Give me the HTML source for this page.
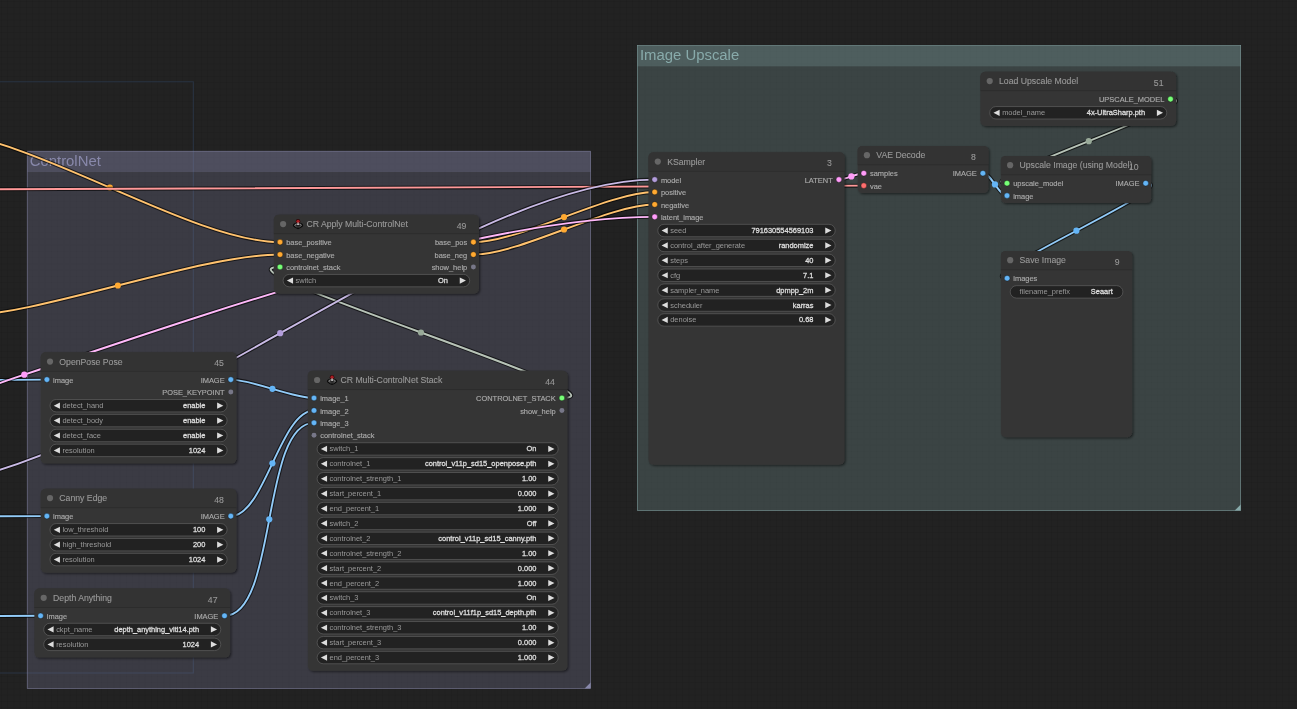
<!DOCTYPE html><html><head><meta charset="utf-8"><style>html,body{margin:0;padding:0;background:#222;overflow:hidden;width:1297px;height:709px}svg{display:block}text{font-family:"Liberation Sans", sans-serif}</style></head><body>
<svg width="1297" height="709" viewBox="0 0 1297 709" style="will-change:transform">
<defs><pattern id="grid" x="7.2" y="7.2" width="6.25" height="6.25" patternUnits="userSpaceOnUse"><rect x="0" y="0" width="6.25" height="0.6" fill="rgba(0,0,0,0.09)"/><rect x="0" y="0" width="0.6" height="6.25" fill="rgba(0,0,0,0.09)"/></pattern><filter id="sh" x="-10%" y="-10%" width="120%" height="120%"><feDropShadow dx="1.25" dy="1.25" stdDeviation="0.9" flood-color="#000" flood-opacity="0.5"/></filter></defs>
<rect width="1297" height="709" fill="#222"/>
<rect width="1297" height="709" fill="url(#grid)"/>
<rect x="-2" y="81.8" width="195.3" height="591.2" fill="none" stroke="rgba(60,95,150,0.3)" stroke-width="1"/>
<rect x="27.2" y="151.2" width="563.4" height="537.2" fill="#88A" fill-opacity="0.25"/>
<rect x="27.2" y="151.2" width="563.4" height="20.86" fill="#88A" fill-opacity="0.25"/>
<rect x="27.2" y="151.2" width="563.4" height="537.2" fill="none" stroke="#88A" stroke-opacity="0.85" stroke-width="0.62"/>
<path d="M590.6 682.4L590.6 688.4L584.6 688.4Z" fill="#88A"/>
<text x="29.68" y="166.1" font-size="14.9" fill="#88A">ControlNet</text>
<rect x="637.4" y="45.5" width="603.3" height="465.1" fill="#8AA" fill-opacity="0.25"/>
<rect x="637.4" y="45.5" width="603.3" height="20.86" fill="#8AA" fill-opacity="0.25"/>
<rect x="637.4" y="45.5" width="603.3" height="465.1" fill="none" stroke="#8AA" stroke-opacity="0.85" stroke-width="0.62"/>
<path d="M1240.7 504.6L1240.7 510.6L1234.7 510.6Z" fill="#8AA"/>
<text x="639.88" y="60.4" font-size="14.9" fill="#8AA">Image Upscale</text>
<path d="M-60.25 133C29.08 133 190.68 242.12 280.01 242.12" stroke="rgba(0,0,0,0.62)" stroke-width="4" fill="none" stroke-linejoin="round"/>
<path d="M-60.25 133C29.08 133 190.68 242.12 280.01 242.12" stroke="#ffc26e" stroke-width="1.9" fill="none"/>
<circle cx="109.88" cy="187.56" r="3.1" fill="#FFA931"/>
<path d="M-44.25 316.5C38.28 316.5 197.48 254.54 280.01 254.54" stroke="rgba(0,0,0,0.62)" stroke-width="4" fill="none" stroke-linejoin="round"/>
<path d="M-44.25 316.5C38.28 316.5 197.48 254.54 280.01 254.54" stroke="#ffc26e" stroke-width="1.9" fill="none"/>
<circle cx="117.88" cy="285.52" r="3.1" fill="#FFA931"/>
<path d="M561.91 398.02C639.63 398.02 202.29 266.96 280.01 266.96" stroke="rgba(0,0,0,0.62)" stroke-width="4" fill="none" stroke-linejoin="round"/>
<path d="M561.91 398.02C639.63 398.02 202.29 266.96 280.01 266.96" stroke="#b7c3b7" stroke-width="1.9" fill="none"/>
<circle cx="420.96" cy="332.49" r="3.1" fill="#9A9"/>
<path d="M-500 389C-363.25 389 -89.84 379.62 46.91 379.62" stroke="rgba(0,0,0,0.62)" stroke-width="4" fill="none" stroke-linejoin="round"/>
<path d="M-500 389C-363.25 389 -89.84 379.62 46.91 379.62" stroke="#92cbf8" stroke-width="1.9" fill="none"/>
<circle cx="-226.55" cy="384.31" r="3.1" fill="#64B5F6"/>
<path d="M-500 518C-363.27 518 -89.82 516.12 46.91 516.12" stroke="rgba(0,0,0,0.62)" stroke-width="4" fill="none" stroke-linejoin="round"/>
<path d="M-500 518C-363.27 518 -89.82 516.12 46.91 516.12" stroke="#92cbf8" stroke-width="1.9" fill="none"/>
<circle cx="-226.55" cy="517.06" r="3.1" fill="#64B5F6"/>
<path d="M-500 618C-364.85 618 -94.54 615.82 40.61 615.82" stroke="rgba(0,0,0,0.62)" stroke-width="4" fill="none" stroke-linejoin="round"/>
<path d="M-500 618C-364.85 618 -94.54 615.82 40.61 615.82" stroke="#92cbf8" stroke-width="1.9" fill="none"/>
<circle cx="-229.7" cy="616.91" r="3.1" fill="#64B5F6"/>
<path d="M230.81 379.62C252.11 379.62 292.71 398.02 314.01 398.02" stroke="rgba(0,0,0,0.62)" stroke-width="4" fill="none" stroke-linejoin="round"/>
<path d="M230.81 379.62C252.11 379.62 292.71 398.02 314.01 398.02" stroke="#92cbf8" stroke-width="1.9" fill="none"/>
<circle cx="272.41" cy="388.82" r="3.1" fill="#64B5F6"/>
<path d="M230.81 516.12C264.44 516.12 280.38 410.44 314.01 410.44" stroke="rgba(0,0,0,0.62)" stroke-width="4" fill="none" stroke-linejoin="round"/>
<path d="M230.81 516.12C264.44 516.12 280.38 410.44 314.01 410.44" stroke="#92cbf8" stroke-width="1.9" fill="none"/>
<circle cx="272.41" cy="463.28" r="3.1" fill="#64B5F6"/>
<path d="M224.51 615.82C277.69 615.82 260.83 422.86 314.01 422.86" stroke="rgba(0,0,0,0.62)" stroke-width="4" fill="none" stroke-linejoin="round"/>
<path d="M224.51 615.82C277.69 615.82 260.83 422.86 314.01 422.86" stroke="#92cbf8" stroke-width="1.9" fill="none"/>
<circle cx="269.26" cy="519.34" r="3.1" fill="#64B5F6"/>
<path d="M838.91 179.62C845.34 179.62 857.38 173.22 863.81 173.22" stroke="rgba(0,0,0,0.62)" stroke-width="4" fill="none" stroke-linejoin="round"/>
<path d="M838.91 179.62C845.34 179.62 857.38 173.22 863.81 173.22" stroke="#ffb9fa" stroke-width="1.9" fill="none"/>
<circle cx="851.36" cy="176.42" r="3.1" fill="#FF9CF9"/>
<path d="M-1000 193.5C-534.04 193.5 397.85 185.64 863.81 185.64" stroke="rgba(0,0,0,0.62)" stroke-width="4" fill="none" stroke-linejoin="round"/>
<path d="M-1000 193.5C-534.04 193.5 397.85 185.64 863.81 185.64" stroke="#ff9999" stroke-width="1.9" fill="none"/>
<circle cx="-68.1" cy="189.57" r="3.1" fill="#FF6E6E"/>
<path d="M-94.31 486.78C108.08 486.78 452.32 179.62 654.71 179.62" stroke="rgba(0,0,0,0.62)" stroke-width="4" fill="none" stroke-linejoin="round"/>
<path d="M-94.31 486.78C108.08 486.78 452.32 179.62 654.71 179.62" stroke="#c9bae5" stroke-width="1.9" fill="none"/>
<circle cx="280.2" cy="333.2" r="3.1" fill="#B39DDB"/>
<path d="M473.41 242.12C520.43 242.12 607.69 192.04 654.71 192.04" stroke="rgba(0,0,0,0.62)" stroke-width="4" fill="none" stroke-linejoin="round"/>
<path d="M473.41 242.12C520.43 242.12 607.69 192.04 654.71 192.04" stroke="#ffc26e" stroke-width="1.9" fill="none"/>
<circle cx="564.06" cy="217.08" r="3.1" fill="#FFA931"/>
<path d="M473.41 254.54C520.43 254.54 607.69 204.46 654.71 204.46" stroke="rgba(0,0,0,0.62)" stroke-width="4" fill="none" stroke-linejoin="round"/>
<path d="M473.41 254.54C520.43 254.54 607.69 204.46 654.71 204.46" stroke="#ffc26e" stroke-width="1.9" fill="none"/>
<circle cx="564.06" cy="229.5" r="3.1" fill="#FFA931"/>
<path d="M-606.11 532.53C-281.18 532.53 329.78 216.87 654.71 216.87" stroke="rgba(0,0,0,0.62)" stroke-width="4" fill="none" stroke-linejoin="round"/>
<path d="M-606.11 532.53C-281.18 532.53 329.78 216.87 654.71 216.87" stroke="#ffb9fa" stroke-width="1.9" fill="none"/>
<circle cx="24.3" cy="374.7" r="3.1" fill="#FF9CF9"/>
<path d="M1170.51 99.12C1216.48 99.12 961.04 183.22 1007.01 183.22" stroke="rgba(0,0,0,0.62)" stroke-width="4" fill="none" stroke-linejoin="round"/>
<path d="M1170.51 99.12C1216.48 99.12 961.04 183.22 1007.01 183.22" stroke="#b7c3b7" stroke-width="1.9" fill="none"/>
<circle cx="1088.76" cy="141.17" r="3.1" fill="#9A9"/>
<path d="M982.91 173.22C991.14 173.22 998.78 195.64 1007.01 195.64" stroke="rgba(0,0,0,0.62)" stroke-width="4" fill="none" stroke-linejoin="round"/>
<path d="M982.91 173.22C991.14 173.22 998.78 195.64 1007.01 195.64" stroke="#92cbf8" stroke-width="1.9" fill="none"/>
<circle cx="994.96" cy="184.43" r="3.1" fill="#64B5F6"/>
<path d="M1145.71 183.22C1187.72 183.22 965.1 278.22 1007.11 278.22" stroke="rgba(0,0,0,0.62)" stroke-width="4" fill="none" stroke-linejoin="round"/>
<path d="M1145.71 183.22C1187.72 183.22 965.1 278.22 1007.11 278.22" stroke="#92cbf8" stroke-width="1.9" fill="none"/>
<circle cx="1076.41" cy="230.72" r="3.1" fill="#64B5F6"/>
<g>
<rect x="273.8" y="214.8" width="205.2" height="79.02" rx="4.97" fill="#353535" filter="url(#sh)"/>
<path d="M273.8 233.43V219.77A4.97 4.97 0 0 1 278.77 214.8H474.03A4.97 4.97 0 0 1 479 219.77V233.43Z" fill="#333"/>
<rect x="273.8" y="233.43" width="205.2" height="0.7" fill="rgba(0,0,0,0.2)"/>
<circle cx="283.11" cy="224.11" r="3.1" fill="#666"/>
<g transform="translate(298.05 225.4)"><path d="M-5.2 0Q-5.2 -1.4 -3 -2.4L-1 -3H1L3 -2.4Q5.2 -1.4 5.2 0Q5.2 1.4 2.5 2.6L0 3.8L-2.5 2.6Q-5.2 1.4 -5.2 0Z" fill="#0a0a0a"/><ellipse cx="0" cy="-0.2" rx="3.3" ry="1.35" fill="none" stroke="#a8a8a8" stroke-width="0.9"/><ellipse cx="0" cy="1.6" rx="2.4" ry="0.9" fill="#2a2a2a"/><rect x="-0.5" y="-3.2" width="1.0" height="3.0" fill="#d8d8d8"/><circle cx="0" cy="-4.0" r="2.3" fill="#2a0708"/><circle cx="0" cy="-4.1" r="1.65" fill="#a81c22"/><rect x="-0.45" y="-3.0" width="0.9" height="2.6" fill="#e0e0e0"/></g>
<text transform="translate(306.43 227.22) scale(0.91 1)" font-size="9.56" fill="#999" stroke="#999" stroke-width="0.12">CR Apply Multi-ControlNet</text>
<text transform="translate(466.4 228.8) scale(1 1)" font-size="8.69" fill="#999" stroke="#999" stroke-width="0.1" text-anchor="end">49</text>
<circle cx="280.01" cy="242.12" r="2.78" fill="#FFA931" stroke="rgba(0,0,0,0.4)" stroke-width="0.8"/>
<text x="286.22" y="245.22" font-size="7.45" fill="#AAA" stroke="#AAA" stroke-width="0.15">base_positive</text>
<circle cx="280.01" cy="254.54" r="2.78" fill="#FFA931" stroke="rgba(0,0,0,0.4)" stroke-width="0.8"/>
<text x="286.22" y="257.64" font-size="7.45" fill="#AAA" stroke="#AAA" stroke-width="0.15">base_negative</text>
<circle cx="280.01" cy="266.96" r="2.78" fill="#7F7" stroke="rgba(0,0,0,0.4)" stroke-width="0.8"/>
<text x="286.22" y="270.06" font-size="7.45" fill="#AAA" stroke="#AAA" stroke-width="0.15">controlnet_stack</text>
<circle cx="473.41" cy="242.12" r="2.78" fill="#FFA931" stroke="rgba(0,0,0,0.4)" stroke-width="0.8"/>
<text x="467.2" y="245.22" font-size="7.45" fill="#AAA" stroke="#AAA" stroke-width="0.15" text-anchor="end">base_pos</text>
<circle cx="473.41" cy="254.54" r="2.78" fill="#FFA931" stroke="rgba(0,0,0,0.4)" stroke-width="0.8"/>
<text x="467.2" y="257.64" font-size="7.45" fill="#AAA" stroke="#AAA" stroke-width="0.15" text-anchor="end">base_neg</text>
<circle cx="473.41" cy="266.96" r="2.48" fill="#778"/>
<text x="467.2" y="270.06" font-size="7.45" fill="#AAA" stroke="#AAA" stroke-width="0.15" text-anchor="end">show_help</text>
<rect x="283.11" y="274.41" width="186.57" height="12.42" rx="6.21" fill="#222" stroke="#666" stroke-width="0.62"/>
<path d="M293.05 277.51L286.84 280.62L293.05 283.72Z" fill="#DDD"/>
<path d="M459.75 277.51L465.96 280.62L459.75 283.72Z" fill="#DDD"/>
<text x="295.53" y="283.1" font-size="7.45" fill="#999">switch</text>
<text x="447.95" y="283.1" font-size="7.45" fill="#DDD" stroke="#DDD" stroke-width="0.3" text-anchor="end">On</text>
</g>
<g>
<rect x="40.7" y="352.3" width="195.7" height="111.31" rx="4.97" fill="#353535" filter="url(#sh)"/>
<path d="M40.7 370.93V357.27A4.97 4.97 0 0 1 45.67 352.3H231.43A4.97 4.97 0 0 1 236.4 357.27V370.93Z" fill="#333"/>
<rect x="40.7" y="370.93" width="195.7" height="0.7" fill="rgba(0,0,0,0.2)"/>
<circle cx="50.01" cy="361.61" r="3.1" fill="#666"/>
<text transform="translate(59.33 364.72) scale(0.91 1)" font-size="9.56" fill="#999" stroke="#999" stroke-width="0.12">OpenPose Pose</text>
<text transform="translate(223.8 366.3) scale(1 1)" font-size="8.69" fill="#999" stroke="#999" stroke-width="0.1" text-anchor="end">45</text>
<circle cx="46.91" cy="379.62" r="2.78" fill="#64B5F6" stroke="rgba(0,0,0,0.4)" stroke-width="0.8"/>
<text x="53.12" y="382.72" font-size="7.45" fill="#AAA" stroke="#AAA" stroke-width="0.15">image</text>
<circle cx="230.81" cy="379.62" r="2.78" fill="#64B5F6" stroke="rgba(0,0,0,0.4)" stroke-width="0.8"/>
<text x="224.6" y="382.72" font-size="7.45" fill="#AAA" stroke="#AAA" stroke-width="0.15" text-anchor="end">IMAGE</text>
<circle cx="230.81" cy="392.04" r="2.48" fill="#778"/>
<text x="224.6" y="395.14" font-size="7.45" fill="#AAA" stroke="#AAA" stroke-width="0.15" text-anchor="end">POSE_KEYPOINT</text>
<rect x="50.01" y="399.49" width="177.07" height="12.42" rx="6.21" fill="#222" stroke="#666" stroke-width="0.62"/>
<path d="M59.95 402.59L53.74 405.7L59.95 408.8Z" fill="#DDD"/>
<path d="M217.15 402.59L223.36 405.7L217.15 408.8Z" fill="#DDD"/>
<text x="62.43" y="408.18" font-size="7.45" fill="#999">detect_hand</text>
<text x="205.35" y="408.18" font-size="7.45" fill="#DDD" stroke="#DDD" stroke-width="0.3" text-anchor="end">enable</text>
<rect x="50.01" y="414.39" width="177.07" height="12.42" rx="6.21" fill="#222" stroke="#666" stroke-width="0.62"/>
<path d="M59.95 417.49L53.74 420.6L59.95 423.7Z" fill="#DDD"/>
<path d="M217.15 417.49L223.36 420.6L217.15 423.7Z" fill="#DDD"/>
<text x="62.43" y="423.08" font-size="7.45" fill="#999">detect_body</text>
<text x="205.35" y="423.08" font-size="7.45" fill="#DDD" stroke="#DDD" stroke-width="0.3" text-anchor="end">enable</text>
<rect x="50.01" y="429.29" width="177.07" height="12.42" rx="6.21" fill="#222" stroke="#666" stroke-width="0.62"/>
<path d="M59.95 432.4L53.74 435.5L59.95 438.61Z" fill="#DDD"/>
<path d="M217.15 432.4L223.36 435.5L217.15 438.61Z" fill="#DDD"/>
<text x="62.43" y="437.98" font-size="7.45" fill="#999">detect_face</text>
<text x="205.35" y="437.98" font-size="7.45" fill="#DDD" stroke="#DDD" stroke-width="0.3" text-anchor="end">enable</text>
<rect x="50.01" y="444.19" width="177.07" height="12.42" rx="6.21" fill="#222" stroke="#666" stroke-width="0.62"/>
<path d="M59.95 447.3L53.74 450.4L59.95 453.51Z" fill="#DDD"/>
<path d="M217.15 447.3L223.36 450.4L217.15 453.51Z" fill="#DDD"/>
<text x="62.43" y="452.89" font-size="7.45" fill="#999">resolution</text>
<text x="205.35" y="452.89" font-size="7.45" fill="#DDD" stroke="#DDD" stroke-width="0.3" text-anchor="end">1024</text>
</g>
<g>
<rect x="40.7" y="488.8" width="195.7" height="83.99" rx="4.97" fill="#353535" filter="url(#sh)"/>
<path d="M40.7 507.43V493.77A4.97 4.97 0 0 1 45.67 488.8H231.43A4.97 4.97 0 0 1 236.4 493.77V507.43Z" fill="#333"/>
<rect x="40.7" y="507.43" width="195.7" height="0.7" fill="rgba(0,0,0,0.2)"/>
<circle cx="50.01" cy="498.11" r="3.1" fill="#666"/>
<text transform="translate(59.33 501.22) scale(0.91 1)" font-size="9.56" fill="#999" stroke="#999" stroke-width="0.12">Canny Edge</text>
<text transform="translate(223.8 502.8) scale(1 1)" font-size="8.69" fill="#999" stroke="#999" stroke-width="0.1" text-anchor="end">48</text>
<circle cx="46.91" cy="516.12" r="2.78" fill="#64B5F6" stroke="rgba(0,0,0,0.4)" stroke-width="0.8"/>
<text x="53.12" y="519.22" font-size="7.45" fill="#AAA" stroke="#AAA" stroke-width="0.15">image</text>
<circle cx="230.81" cy="516.12" r="2.78" fill="#64B5F6" stroke="rgba(0,0,0,0.4)" stroke-width="0.8"/>
<text x="224.6" y="519.22" font-size="7.45" fill="#AAA" stroke="#AAA" stroke-width="0.15" text-anchor="end">IMAGE</text>
<rect x="50.01" y="523.57" width="177.07" height="12.42" rx="6.21" fill="#222" stroke="#666" stroke-width="0.62"/>
<path d="M59.95 526.67L53.74 529.78L59.95 532.88Z" fill="#DDD"/>
<path d="M217.15 526.67L223.36 529.78L217.15 532.88Z" fill="#DDD"/>
<text x="62.43" y="532.26" font-size="7.45" fill="#999">low_threshold</text>
<text x="205.35" y="532.26" font-size="7.45" fill="#DDD" stroke="#DDD" stroke-width="0.3" text-anchor="end">100</text>
<rect x="50.01" y="538.47" width="177.07" height="12.42" rx="6.21" fill="#222" stroke="#666" stroke-width="0.62"/>
<path d="M59.95 541.58L53.74 544.68L59.95 547.79Z" fill="#DDD"/>
<path d="M217.15 541.58L223.36 544.68L217.15 547.79Z" fill="#DDD"/>
<text x="62.43" y="547.16" font-size="7.45" fill="#999">high_threshold</text>
<text x="205.35" y="547.16" font-size="7.45" fill="#DDD" stroke="#DDD" stroke-width="0.3" text-anchor="end">200</text>
<rect x="50.01" y="553.37" width="177.07" height="12.42" rx="6.21" fill="#222" stroke="#666" stroke-width="0.62"/>
<path d="M59.95 556.48L53.74 559.58L59.95 562.69Z" fill="#DDD"/>
<path d="M217.15 556.48L223.36 559.58L217.15 562.69Z" fill="#DDD"/>
<text x="62.43" y="562.07" font-size="7.45" fill="#999">resolution</text>
<text x="205.35" y="562.07" font-size="7.45" fill="#DDD" stroke="#DDD" stroke-width="0.3" text-anchor="end">1024</text>
</g>
<g>
<rect x="34.4" y="588.5" width="195.7" height="69.09" rx="4.97" fill="#353535" filter="url(#sh)"/>
<path d="M34.4 607.13V593.47A4.97 4.97 0 0 1 39.37 588.5H225.13A4.97 4.97 0 0 1 230.1 593.47V607.13Z" fill="#333"/>
<rect x="34.4" y="607.13" width="195.7" height="0.7" fill="rgba(0,0,0,0.2)"/>
<circle cx="43.71" cy="597.81" r="3.1" fill="#666"/>
<text transform="translate(53.03 600.92) scale(0.91 1)" font-size="9.56" fill="#999" stroke="#999" stroke-width="0.12">Depth Anything</text>
<text transform="translate(217.5 602.5) scale(1 1)" font-size="8.69" fill="#999" stroke="#999" stroke-width="0.1" text-anchor="end">47</text>
<circle cx="40.61" cy="615.82" r="2.78" fill="#64B5F6" stroke="rgba(0,0,0,0.4)" stroke-width="0.8"/>
<text x="46.82" y="618.92" font-size="7.45" fill="#AAA" stroke="#AAA" stroke-width="0.15">image</text>
<circle cx="224.51" cy="615.82" r="2.78" fill="#64B5F6" stroke="rgba(0,0,0,0.4)" stroke-width="0.8"/>
<text x="218.3" y="618.92" font-size="7.45" fill="#AAA" stroke="#AAA" stroke-width="0.15" text-anchor="end">IMAGE</text>
<rect x="43.71" y="623.27" width="177.07" height="12.42" rx="6.21" fill="#222" stroke="#666" stroke-width="0.62"/>
<path d="M53.65 626.37L47.44 629.48L53.65 632.58Z" fill="#DDD"/>
<path d="M210.85 626.37L217.06 629.48L210.85 632.58Z" fill="#DDD"/>
<text x="56.13" y="631.96" font-size="7.45" fill="#999">ckpt_name</text>
<text x="199.06" y="631.96" font-size="7.45" fill="#DDD" stroke="#DDD" stroke-width="0.3" text-anchor="end">depth_anything_vitl14.pth</text>
<rect x="43.71" y="638.17" width="177.07" height="12.42" rx="6.21" fill="#222" stroke="#666" stroke-width="0.62"/>
<path d="M53.65 641.28L47.44 644.38L53.65 647.49Z" fill="#DDD"/>
<path d="M210.85 641.28L217.06 644.38L210.85 647.49Z" fill="#DDD"/>
<text x="56.13" y="646.86" font-size="7.45" fill="#999">resolution</text>
<text x="199.06" y="646.86" font-size="7.45" fill="#DDD" stroke="#DDD" stroke-width="0.3" text-anchor="end">1024</text>
</g>
<g>
<rect x="307.8" y="370.7" width="259.7" height="300.06" rx="4.97" fill="#353535" filter="url(#sh)"/>
<path d="M307.8 389.33V375.67A4.97 4.97 0 0 1 312.77 370.7H562.53A4.97 4.97 0 0 1 567.5 375.67V389.33Z" fill="#333"/>
<rect x="307.8" y="389.33" width="259.7" height="0.7" fill="rgba(0,0,0,0.2)"/>
<circle cx="317.11" cy="380.01" r="3.1" fill="#666"/>
<g transform="translate(332.05 381.3)"><path d="M-5.2 0Q-5.2 -1.4 -3 -2.4L-1 -3H1L3 -2.4Q5.2 -1.4 5.2 0Q5.2 1.4 2.5 2.6L0 3.8L-2.5 2.6Q-5.2 1.4 -5.2 0Z" fill="#0a0a0a"/><ellipse cx="0" cy="-0.2" rx="3.3" ry="1.35" fill="none" stroke="#a8a8a8" stroke-width="0.9"/><ellipse cx="0" cy="1.6" rx="2.4" ry="0.9" fill="#2a2a2a"/><rect x="-0.5" y="-3.2" width="1.0" height="3.0" fill="#d8d8d8"/><circle cx="0" cy="-4.0" r="2.3" fill="#2a0708"/><circle cx="0" cy="-4.1" r="1.65" fill="#a81c22"/><rect x="-0.45" y="-3.0" width="0.9" height="2.6" fill="#e0e0e0"/></g>
<text transform="translate(340.43 383.12) scale(0.91 1)" font-size="9.56" fill="#999" stroke="#999" stroke-width="0.12">CR Multi-ControlNet Stack</text>
<text transform="translate(554.9 384.7) scale(1 1)" font-size="8.69" fill="#999" stroke="#999" stroke-width="0.1" text-anchor="end">44</text>
<circle cx="314.01" cy="398.02" r="2.78" fill="#64B5F6" stroke="rgba(0,0,0,0.4)" stroke-width="0.8"/>
<text x="320.22" y="401.12" font-size="7.45" fill="#AAA" stroke="#AAA" stroke-width="0.15">image_1</text>
<circle cx="314.01" cy="410.44" r="2.78" fill="#64B5F6" stroke="rgba(0,0,0,0.4)" stroke-width="0.8"/>
<text x="320.22" y="413.54" font-size="7.45" fill="#AAA" stroke="#AAA" stroke-width="0.15">image_2</text>
<circle cx="314.01" cy="422.86" r="2.78" fill="#64B5F6" stroke="rgba(0,0,0,0.4)" stroke-width="0.8"/>
<text x="320.22" y="425.96" font-size="7.45" fill="#AAA" stroke="#AAA" stroke-width="0.15">image_3</text>
<circle cx="314.01" cy="435.27" r="2.48" fill="#778"/>
<text x="320.22" y="438.38" font-size="7.45" fill="#AAA" stroke="#AAA" stroke-width="0.15">controlnet_stack</text>
<circle cx="561.91" cy="398.02" r="2.78" fill="#7F7" stroke="rgba(0,0,0,0.4)" stroke-width="0.8"/>
<text x="555.7" y="401.12" font-size="7.45" fill="#AAA" stroke="#AAA" stroke-width="0.15" text-anchor="end">CONTROLNET_STACK</text>
<circle cx="561.91" cy="410.44" r="2.48" fill="#778"/>
<text x="555.7" y="413.54" font-size="7.45" fill="#AAA" stroke="#AAA" stroke-width="0.15" text-anchor="end">show_help</text>
<rect x="317.11" y="442.72" width="241.07" height="12.42" rx="6.21" fill="#222" stroke="#666" stroke-width="0.62"/>
<path d="M327.05 445.83L320.84 448.93L327.05 452.04Z" fill="#DDD"/>
<path d="M548.25 445.83L554.46 448.93L548.25 452.04Z" fill="#DDD"/>
<text x="329.53" y="451.42" font-size="7.45" fill="#999">switch_1</text>
<text x="536.46" y="451.42" font-size="7.45" fill="#DDD" stroke="#DDD" stroke-width="0.3" text-anchor="end">On</text>
<rect x="317.11" y="457.63" width="241.07" height="12.42" rx="6.21" fill="#222" stroke="#666" stroke-width="0.62"/>
<path d="M327.05 460.73L320.84 463.83L327.05 466.94Z" fill="#DDD"/>
<path d="M548.25 460.73L554.46 463.83L548.25 466.94Z" fill="#DDD"/>
<text x="329.53" y="466.32" font-size="7.45" fill="#999">controlnet_1</text>
<text x="536.46" y="466.32" font-size="7.45" fill="#DDD" stroke="#DDD" stroke-width="0.3" text-anchor="end">control_v11p_sd15_openpose.pth</text>
<rect x="317.11" y="472.53" width="241.07" height="12.42" rx="6.21" fill="#222" stroke="#666" stroke-width="0.62"/>
<path d="M327.05 475.63L320.84 478.74L327.05 481.84Z" fill="#DDD"/>
<path d="M548.25 475.63L554.46 478.74L548.25 481.84Z" fill="#DDD"/>
<text x="329.53" y="481.22" font-size="7.45" fill="#999">controlnet_strength_1</text>
<text x="536.46" y="481.22" font-size="7.45" fill="#DDD" stroke="#DDD" stroke-width="0.3" text-anchor="end">1.00</text>
<rect x="317.11" y="487.43" width="241.07" height="12.42" rx="6.21" fill="#222" stroke="#666" stroke-width="0.62"/>
<path d="M327.05 490.53L320.84 493.64L327.05 496.74Z" fill="#DDD"/>
<path d="M548.25 490.53L554.46 493.64L548.25 496.74Z" fill="#DDD"/>
<text x="329.53" y="496.12" font-size="7.45" fill="#999">start_percent_1</text>
<text x="536.46" y="496.12" font-size="7.45" fill="#DDD" stroke="#DDD" stroke-width="0.3" text-anchor="end">0.000</text>
<rect x="317.11" y="502.33" width="241.07" height="12.42" rx="6.21" fill="#222" stroke="#666" stroke-width="0.62"/>
<path d="M327.05 505.44L320.84 508.54L327.05 511.64Z" fill="#DDD"/>
<path d="M548.25 505.44L554.46 508.54L548.25 511.64Z" fill="#DDD"/>
<text x="329.53" y="511.02" font-size="7.45" fill="#999">end_percent_1</text>
<text x="536.46" y="511.02" font-size="7.45" fill="#DDD" stroke="#DDD" stroke-width="0.3" text-anchor="end">1.000</text>
<rect x="317.11" y="517.23" width="241.07" height="12.42" rx="6.21" fill="#222" stroke="#666" stroke-width="0.62"/>
<path d="M327.05 520.34L320.84 523.44L327.05 526.55Z" fill="#DDD"/>
<path d="M548.25 520.34L554.46 523.44L548.25 526.55Z" fill="#DDD"/>
<text x="329.53" y="525.92" font-size="7.45" fill="#999">switch_2</text>
<text x="536.46" y="525.92" font-size="7.45" fill="#DDD" stroke="#DDD" stroke-width="0.3" text-anchor="end">Off</text>
<rect x="317.11" y="532.13" width="241.07" height="12.42" rx="6.21" fill="#222" stroke="#666" stroke-width="0.62"/>
<path d="M327.05 535.24L320.84 538.34L327.05 541.45Z" fill="#DDD"/>
<path d="M548.25 535.24L554.46 538.34L548.25 541.45Z" fill="#DDD"/>
<text x="329.53" y="540.83" font-size="7.45" fill="#999">controlnet_2</text>
<text x="536.46" y="540.83" font-size="7.45" fill="#DDD" stroke="#DDD" stroke-width="0.3" text-anchor="end">control_v11p_sd15_canny.pth</text>
<rect x="317.11" y="547.04" width="241.07" height="12.42" rx="6.21" fill="#222" stroke="#666" stroke-width="0.62"/>
<path d="M327.05 550.14L320.84 553.24L327.05 556.35Z" fill="#DDD"/>
<path d="M548.25 550.14L554.46 553.24L548.25 556.35Z" fill="#DDD"/>
<text x="329.53" y="555.73" font-size="7.45" fill="#999">controlnet_strength_2</text>
<text x="536.46" y="555.73" font-size="7.45" fill="#DDD" stroke="#DDD" stroke-width="0.3" text-anchor="end">1.00</text>
<rect x="317.11" y="561.94" width="241.07" height="12.42" rx="6.21" fill="#222" stroke="#666" stroke-width="0.62"/>
<path d="M327.05 565.04L320.84 568.15L327.05 571.25Z" fill="#DDD"/>
<path d="M548.25 565.04L554.46 568.15L548.25 571.25Z" fill="#DDD"/>
<text x="329.53" y="570.63" font-size="7.45" fill="#999">start_percent_2</text>
<text x="536.46" y="570.63" font-size="7.45" fill="#DDD" stroke="#DDD" stroke-width="0.3" text-anchor="end">0.000</text>
<rect x="317.11" y="576.84" width="241.07" height="12.42" rx="6.21" fill="#222" stroke="#666" stroke-width="0.62"/>
<path d="M327.05 579.94L320.84 583.05L327.05 586.15Z" fill="#DDD"/>
<path d="M548.25 579.94L554.46 583.05L548.25 586.15Z" fill="#DDD"/>
<text x="329.53" y="585.53" font-size="7.45" fill="#999">end_percent_2</text>
<text x="536.46" y="585.53" font-size="7.45" fill="#DDD" stroke="#DDD" stroke-width="0.3" text-anchor="end">1.000</text>
<rect x="317.11" y="591.74" width="241.07" height="12.42" rx="6.21" fill="#222" stroke="#666" stroke-width="0.62"/>
<path d="M327.05 594.84L320.84 597.95L327.05 601.05Z" fill="#DDD"/>
<path d="M548.25 594.84L554.46 597.95L548.25 601.05Z" fill="#DDD"/>
<text x="329.53" y="600.43" font-size="7.45" fill="#999">switch_3</text>
<text x="536.46" y="600.43" font-size="7.45" fill="#DDD" stroke="#DDD" stroke-width="0.3" text-anchor="end">On</text>
<rect x="317.11" y="606.64" width="241.07" height="12.42" rx="6.21" fill="#222" stroke="#666" stroke-width="0.62"/>
<path d="M327.05 609.75L320.84 612.85L327.05 615.96Z" fill="#DDD"/>
<path d="M548.25 609.75L554.46 612.85L548.25 615.96Z" fill="#DDD"/>
<text x="329.53" y="615.33" font-size="7.45" fill="#999">controlnet_3</text>
<text x="536.46" y="615.33" font-size="7.45" fill="#DDD" stroke="#DDD" stroke-width="0.3" text-anchor="end">control_v11f1p_sd15_depth.pth</text>
<rect x="317.11" y="621.54" width="241.07" height="12.42" rx="6.21" fill="#222" stroke="#666" stroke-width="0.62"/>
<path d="M327.05 624.65L320.84 627.75L327.05 630.86Z" fill="#DDD"/>
<path d="M548.25 624.65L554.46 627.75L548.25 630.86Z" fill="#DDD"/>
<text x="329.53" y="630.24" font-size="7.45" fill="#999">controlnet_strength_3</text>
<text x="536.46" y="630.24" font-size="7.45" fill="#DDD" stroke="#DDD" stroke-width="0.3" text-anchor="end">1.00</text>
<rect x="317.11" y="636.45" width="241.07" height="12.42" rx="6.21" fill="#222" stroke="#666" stroke-width="0.62"/>
<path d="M327.05 639.55L320.84 642.65L327.05 645.76Z" fill="#DDD"/>
<path d="M548.25 639.55L554.46 642.65L548.25 645.76Z" fill="#DDD"/>
<text x="329.53" y="645.14" font-size="7.45" fill="#999">start_percent_3</text>
<text x="536.46" y="645.14" font-size="7.45" fill="#DDD" stroke="#DDD" stroke-width="0.3" text-anchor="end">0.000</text>
<rect x="317.11" y="651.35" width="241.07" height="12.42" rx="6.21" fill="#222" stroke="#666" stroke-width="0.62"/>
<path d="M327.05 654.45L320.84 657.56L327.05 660.66Z" fill="#DDD"/>
<path d="M548.25 654.45L554.46 657.56L548.25 660.66Z" fill="#DDD"/>
<text x="329.53" y="660.04" font-size="7.45" fill="#999">end_percent_3</text>
<text x="536.46" y="660.04" font-size="7.45" fill="#DDD" stroke="#DDD" stroke-width="0.3" text-anchor="end">1.000</text>
</g>
<g>
<rect x="648.5" y="152.3" width="196" height="312.4" rx="4.97" fill="#353535" filter="url(#sh)"/>
<path d="M648.5 170.93V157.27A4.97 4.97 0 0 1 653.47 152.3H839.53A4.97 4.97 0 0 1 844.5 157.27V170.93Z" fill="#333"/>
<rect x="648.5" y="170.93" width="196" height="0.7" fill="rgba(0,0,0,0.2)"/>
<circle cx="657.81" cy="161.61" r="3.1" fill="#666"/>
<text transform="translate(667.13 164.72) scale(0.91 1)" font-size="9.56" fill="#999" stroke="#999" stroke-width="0.12">KSampler</text>
<text transform="translate(831.9 166.3) scale(1 1)" font-size="8.69" fill="#999" stroke="#999" stroke-width="0.1" text-anchor="end">3</text>
<circle cx="654.71" cy="179.62" r="2.78" fill="#B39DDB" stroke="rgba(0,0,0,0.4)" stroke-width="0.8"/>
<text x="660.92" y="182.72" font-size="7.45" fill="#AAA" stroke="#AAA" stroke-width="0.15">model</text>
<circle cx="654.71" cy="192.04" r="2.78" fill="#FFA931" stroke="rgba(0,0,0,0.4)" stroke-width="0.8"/>
<text x="660.92" y="195.14" font-size="7.45" fill="#AAA" stroke="#AAA" stroke-width="0.15">positive</text>
<circle cx="654.71" cy="204.46" r="2.78" fill="#FFA931" stroke="rgba(0,0,0,0.4)" stroke-width="0.8"/>
<text x="660.92" y="207.56" font-size="7.45" fill="#AAA" stroke="#AAA" stroke-width="0.15">negative</text>
<circle cx="654.71" cy="216.87" r="2.78" fill="#FF9CF9" stroke="rgba(0,0,0,0.4)" stroke-width="0.8"/>
<text x="660.92" y="219.98" font-size="7.45" fill="#AAA" stroke="#AAA" stroke-width="0.15">latent_image</text>
<circle cx="838.91" cy="179.62" r="2.78" fill="#FF9CF9" stroke="rgba(0,0,0,0.4)" stroke-width="0.8"/>
<text x="832.7" y="182.72" font-size="7.45" fill="#AAA" stroke="#AAA" stroke-width="0.15" text-anchor="end">LATENT</text>
<rect x="657.81" y="224.32" width="177.37" height="12.42" rx="6.21" fill="#222" stroke="#666" stroke-width="0.62"/>
<path d="M667.75 227.43L661.54 230.53L667.75 233.64Z" fill="#DDD"/>
<path d="M825.25 227.43L831.46 230.53L825.25 233.64Z" fill="#DDD"/>
<text x="670.23" y="233.02" font-size="7.45" fill="#999">seed</text>
<text x="813.46" y="233.02" font-size="7.45" fill="#DDD" stroke="#DDD" stroke-width="0.3" text-anchor="end">791630554569103</text>
<rect x="657.81" y="239.23" width="177.37" height="12.42" rx="6.21" fill="#222" stroke="#666" stroke-width="0.62"/>
<path d="M667.75 242.33L661.54 245.44L667.75 248.54Z" fill="#DDD"/>
<path d="M825.25 242.33L831.46 245.44L825.25 248.54Z" fill="#DDD"/>
<text x="670.23" y="247.92" font-size="7.45" fill="#999">control_after_generate</text>
<text x="813.46" y="247.92" font-size="7.45" fill="#DDD" stroke="#DDD" stroke-width="0.3" text-anchor="end">randomize</text>
<rect x="657.81" y="254.13" width="177.37" height="12.42" rx="6.21" fill="#222" stroke="#666" stroke-width="0.62"/>
<path d="M667.75 257.23L661.54 260.34L667.75 263.44Z" fill="#DDD"/>
<path d="M825.25 257.23L831.46 260.34L825.25 263.44Z" fill="#DDD"/>
<text x="670.23" y="262.82" font-size="7.45" fill="#999">steps</text>
<text x="813.46" y="262.82" font-size="7.45" fill="#DDD" stroke="#DDD" stroke-width="0.3" text-anchor="end">40</text>
<rect x="657.81" y="269.03" width="177.37" height="12.42" rx="6.21" fill="#222" stroke="#666" stroke-width="0.62"/>
<path d="M667.75 272.13L661.54 275.24L667.75 278.34Z" fill="#DDD"/>
<path d="M825.25 272.13L831.46 275.24L825.25 278.34Z" fill="#DDD"/>
<text x="670.23" y="277.72" font-size="7.45" fill="#999">cfg</text>
<text x="813.46" y="277.72" font-size="7.45" fill="#DDD" stroke="#DDD" stroke-width="0.3" text-anchor="end">7.1</text>
<rect x="657.81" y="283.93" width="177.37" height="12.42" rx="6.21" fill="#222" stroke="#666" stroke-width="0.62"/>
<path d="M667.75 287.04L661.54 290.14L667.75 293.24Z" fill="#DDD"/>
<path d="M825.25 287.04L831.46 290.14L825.25 293.24Z" fill="#DDD"/>
<text x="670.23" y="292.62" font-size="7.45" fill="#999">sampler_name</text>
<text x="813.46" y="292.62" font-size="7.45" fill="#DDD" stroke="#DDD" stroke-width="0.3" text-anchor="end">dpmpp_2m</text>
<rect x="657.81" y="298.83" width="177.37" height="12.42" rx="6.21" fill="#222" stroke="#666" stroke-width="0.62"/>
<path d="M667.75 301.94L661.54 305.04L667.75 308.15Z" fill="#DDD"/>
<path d="M825.25 301.94L831.46 305.04L825.25 308.15Z" fill="#DDD"/>
<text x="670.23" y="307.52" font-size="7.45" fill="#999">scheduler</text>
<text x="813.46" y="307.52" font-size="7.45" fill="#DDD" stroke="#DDD" stroke-width="0.3" text-anchor="end">karras</text>
<rect x="657.81" y="313.73" width="177.37" height="12.42" rx="6.21" fill="#222" stroke="#666" stroke-width="0.62"/>
<path d="M667.75 316.84L661.54 319.94L667.75 323.05Z" fill="#DDD"/>
<path d="M825.25 316.84L831.46 319.94L825.25 323.05Z" fill="#DDD"/>
<text x="670.23" y="322.43" font-size="7.45" fill="#999">denoise</text>
<text x="813.46" y="322.43" font-size="7.45" fill="#DDD" stroke="#DDD" stroke-width="0.3" text-anchor="end">0.68</text>
</g>
<g>
<rect x="857.6" y="145.9" width="130.9" height="47.19" rx="4.97" fill="#353535" filter="url(#sh)"/>
<path d="M857.6 164.53V150.87A4.97 4.97 0 0 1 862.57 145.9H983.53A4.97 4.97 0 0 1 988.5 150.87V164.53Z" fill="#333"/>
<rect x="857.6" y="164.53" width="130.9" height="0.7" fill="rgba(0,0,0,0.2)"/>
<circle cx="866.91" cy="155.21" r="3.1" fill="#666"/>
<text transform="translate(876.23 158.32) scale(0.91 1)" font-size="9.56" fill="#999" stroke="#999" stroke-width="0.12">VAE Decode</text>
<text transform="translate(975.9 159.9) scale(1 1)" font-size="8.69" fill="#999" stroke="#999" stroke-width="0.1" text-anchor="end">8</text>
<circle cx="863.81" cy="173.22" r="2.78" fill="#FF9CF9" stroke="rgba(0,0,0,0.4)" stroke-width="0.8"/>
<text x="870.02" y="176.32" font-size="7.45" fill="#AAA" stroke="#AAA" stroke-width="0.15">samples</text>
<circle cx="863.81" cy="185.64" r="2.78" fill="#FF6E6E" stroke="rgba(0,0,0,0.4)" stroke-width="0.8"/>
<text x="870.02" y="188.74" font-size="7.45" fill="#AAA" stroke="#AAA" stroke-width="0.15">vae</text>
<circle cx="982.91" cy="173.22" r="2.78" fill="#64B5F6" stroke="rgba(0,0,0,0.4)" stroke-width="0.8"/>
<text x="976.7" y="176.32" font-size="7.45" fill="#AAA" stroke="#AAA" stroke-width="0.15" text-anchor="end">IMAGE</text>
</g>
<g>
<rect x="980.4" y="71.8" width="195.7" height="54.19" rx="4.97" fill="#353535" filter="url(#sh)"/>
<path d="M980.4 90.43V76.77A4.97 4.97 0 0 1 985.37 71.8H1171.13A4.97 4.97 0 0 1 1176.1 76.77V90.43Z" fill="#333"/>
<rect x="980.4" y="90.43" width="195.7" height="0.7" fill="rgba(0,0,0,0.2)"/>
<circle cx="989.71" cy="81.11" r="3.1" fill="#666"/>
<text transform="translate(999.03 84.22) scale(0.91 1)" font-size="9.56" fill="#999" stroke="#999" stroke-width="0.12">Load Upscale Model</text>
<text transform="translate(1163.5 85.8) scale(1 1)" font-size="8.69" fill="#999" stroke="#999" stroke-width="0.1" text-anchor="end">51</text>
<circle cx="1170.51" cy="99.12" r="2.78" fill="#7F7" stroke="rgba(0,0,0,0.4)" stroke-width="0.8"/>
<text x="1164.3" y="102.22" font-size="7.45" fill="#AAA" stroke="#AAA" stroke-width="0.15" text-anchor="end">UPSCALE_MODEL</text>
<rect x="989.71" y="106.57" width="177.07" height="12.42" rx="6.21" fill="#222" stroke="#666" stroke-width="0.62"/>
<path d="M999.65 109.67L993.44 112.78L999.65 115.88Z" fill="#DDD"/>
<path d="M1156.85 109.67L1163.06 112.78L1156.85 115.88Z" fill="#DDD"/>
<text x="1002.13" y="115.26" font-size="7.45" fill="#999">model_name</text>
<text x="1145.05" y="115.26" font-size="7.45" fill="#DDD" stroke="#DDD" stroke-width="0.3" text-anchor="end">4x-UltraSharp.pth</text>
</g>
<g>
<rect x="1000.8" y="155.9" width="150.5" height="47.19" rx="4.97" fill="#353535" filter="url(#sh)"/>
<path d="M1000.8 174.53V160.87A4.97 4.97 0 0 1 1005.77 155.9H1146.33A4.97 4.97 0 0 1 1151.3 160.87V174.53Z" fill="#333"/>
<rect x="1000.8" y="174.53" width="150.5" height="0.7" fill="rgba(0,0,0,0.2)"/>
<circle cx="1010.11" cy="165.21" r="3.1" fill="#666"/>
<text transform="translate(1019.43 168.32) scale(0.91 1)" font-size="9.56" fill="#999" stroke="#999" stroke-width="0.12">Upscale Image (using Model)</text>
<text transform="translate(1138.7 169.9) scale(1 1)" font-size="8.69" fill="#999" stroke="#999" stroke-width="0.1" text-anchor="end">10</text>
<circle cx="1007.01" cy="183.22" r="2.78" fill="#7F7" stroke="rgba(0,0,0,0.4)" stroke-width="0.8"/>
<text x="1013.22" y="186.32" font-size="7.45" fill="#AAA" stroke="#AAA" stroke-width="0.15">upscale_model</text>
<circle cx="1007.01" cy="195.64" r="2.78" fill="#64B5F6" stroke="rgba(0,0,0,0.4)" stroke-width="0.8"/>
<text x="1013.22" y="198.74" font-size="7.45" fill="#AAA" stroke="#AAA" stroke-width="0.15">image</text>
<circle cx="1145.71" cy="183.22" r="2.78" fill="#64B5F6" stroke="rgba(0,0,0,0.4)" stroke-width="0.8"/>
<text x="1139.5" y="186.32" font-size="7.45" fill="#AAA" stroke="#AAA" stroke-width="0.15" text-anchor="end">IMAGE</text>
</g>
<g>
<rect x="1000.9" y="250.9" width="131.3" height="186.3" rx="4.97" fill="#353535" filter="url(#sh)"/>
<path d="M1000.9 269.53V255.87A4.97 4.97 0 0 1 1005.87 250.9H1127.23A4.97 4.97 0 0 1 1132.2 255.87V269.53Z" fill="#333"/>
<rect x="1000.9" y="269.53" width="131.3" height="0.7" fill="rgba(0,0,0,0.2)"/>
<circle cx="1010.21" cy="260.21" r="3.1" fill="#666"/>
<text transform="translate(1019.53 263.32) scale(0.91 1)" font-size="9.56" fill="#999" stroke="#999" stroke-width="0.12">Save Image</text>
<text transform="translate(1119.6 264.9) scale(1 1)" font-size="8.69" fill="#999" stroke="#999" stroke-width="0.1" text-anchor="end">9</text>
<circle cx="1007.11" cy="278.22" r="2.78" fill="#64B5F6" stroke="rgba(0,0,0,0.4)" stroke-width="0.8"/>
<text x="1013.32" y="281.32" font-size="7.45" fill="#AAA" stroke="#AAA" stroke-width="0.15">images</text>
<rect x="1010.21" y="285.67" width="112.67" height="12.42" rx="6.21" fill="#222" stroke="#666" stroke-width="0.62"/>
<text x="1019.53" y="294.36" font-size="7.45" fill="#999">filename_prefix</text>
<text x="1112.77" y="294.36" font-size="7.45" fill="#DDD" stroke="#DDD" stroke-width="0.3" text-anchor="end">Seaart</text>
</g>
</svg></body></html>
